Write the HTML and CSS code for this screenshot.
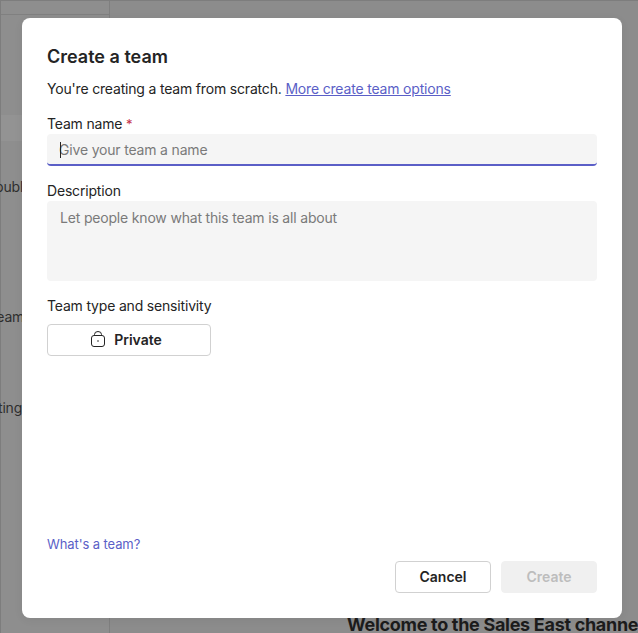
FILE: index.html
```html
<!DOCTYPE html>
<html lang="en">
<head>
<meta charset="utf-8">
<title>Create a team</title>
<link rel="stylesheet" href="styles.css">
</head>
<body>
<div class="app">
  <aside class="sidebar">
    <div class="side-head"></div>
    <div class="side-body">
      <div class="side-band"></div>
      <div class="side-list">
        <span class="side-item side-item-1">publ</span>
        <span class="side-item side-item-2">team</span>
        <span class="side-item side-item-3">ting</span>
      </div>
    </div>
  </aside>
  <main class="main">
    <h2 class="welcome">Welcome to the Sales East channel</h2>
  </main>
</div>
<div class="backdrop">
  <section class="dialog">
    <h1 class="title">Create a team</h1>
    <p class="intro">You're creating a team from scratch. <a class="link" href="#">More create team options</a></p>
    <div class="field field-name">
      <div class="label">Team name <span class="req">*</span></div>
      <div class="input input-focus"><span class="caret"></span><span class="ph">Give your team a name</span></div>
    </div>
    <div class="field field-desc">
      <div class="label">Description</div>
      <div class="textarea"><span class="ph">Let people know what this team is all about</span></div>
    </div>
    <div class="field field-type">
      <div class="label">Team type and sensitivity</div>
      <button class="btn btn-type" type="button">
        <svg class="lock" width="14" height="16" viewBox="0 0 14 16" fill="none" stroke="#242424" stroke-width="1">
          <rect x="0.5" y="4.5" width="13" height="11" rx="2.5"/>
          <path d="M3.5 4.5V3.5a3.5 3 0 0 1 7 0v1"/>
          <circle cx="7" cy="10" r="0.8" fill="#242424" stroke="none"/>
        </svg>
        <span>Private</span>
      </button>
    </div>
    <div class="spacer"></div>
    <a class="help" href="#">What's a team?</a>
    <div class="actions">
      <button class="btn btn-cancel" type="button">Cancel</button>
      <button class="btn btn-create" type="button" disabled>Create</button>
    </div>
  </section>
</div>
</body>
</html>
```
FILE: styles.css
```css
* { box-sizing: border-box; }
html, body { margin: 0; height: 100%; }
body {
  font-family: Inter, "Noto Sans", sans-serif;
  color: #242424;
  background: #8a8a8a;
  overflow: hidden;
  position: relative;
  width: 638px;
  height: 633px;
}
.app {
  display: flex;
  width: 638px;
  height: 633px;
  border-top: 1px solid #7d7d7d;
  border-left: 1px solid #7d7d7d;
}
.sidebar {
  width: 109px;
  flex: none;
  background: #8e8e8e;
  border-right: 1px solid #7f7f7f;
  display: flex;
  flex-direction: column;
}
.side-head { height: 14px; background: #8e8e8e; border-bottom: 1px solid #808080; }
.side-body { flex: 1; display: flex; flex-direction: column; }
.side-band { height: 26px; margin-top: 100px; background: #939393; }
.side-list { display: flex; flex-direction: column; padding-top: 36px; }
.side-item { font-size: 14px; line-height: 20px; color: #2e2e2e; white-space: nowrap; letter-spacing: -0.18px; }
.side-item-1 { margin-left: -6px; }
.side-item-2 { margin-top: 110px; margin-left: -9px; }
.side-item-3 { margin-top: 71px; margin-left: -3px; }
.main { flex: 1; position: relative; background: #8c8c8c; padding: 614px 0 0 237px; }
.welcome { margin: 0; font-size: 18px; line-height: 20px; font-weight: 700; color: #1c1c1c; white-space: nowrap; letter-spacing: -0.3px; }
.backdrop { position: absolute; inset: 0; }
.dialog {
  position: absolute;
  left: 22px;
  top: 18px;
  width: 600px;
  height: 600px;
  background: #fff;
  border-radius: 8px;
  box-shadow: 0 2px 10px rgba(0, 0, 0, 0.06);
  padding: 27px 25px 25px;
  display: flex;
  flex-direction: column;
}
.title { margin: 0; font-size: 18px; line-height: 24px; font-weight: 600; color: #242424; }
.intro { margin: 10px 0 0; font-size: 14px; line-height: 20px; color: #242424; letter-spacing: -0.18px; }
.link { color: #5b5fc7; text-decoration: underline; }
.field { display: flex; flex-direction: column; }
.field-name { margin-top: 15px; }
.field-desc { margin-top: 15px; }
.field-type { margin-top: 15px; }
.label { font-size: 14px; line-height: 20px; color: #242424; letter-spacing: -0.18px; }
.req { color: #c4314b; font-size: 13px; line-height: 1; }
.input {
  height: 32px;
  background: #f5f5f5;
  border-radius: 4px;
  border-bottom: 2px solid #5b5fc7;
  display: flex;
  align-items: center;
  padding: 2px 0 0 12px;
  font-size: 14px;
  position: relative;
}
.caret { position: absolute; left: 13px; top: 8px; width: 1px; height: 16px; background: #242424; }
.ph { color: #7a7a7a; font-size: 14px; line-height: 20px; letter-spacing: -0.18px; }
.textarea {
  height: 80px;
  background: #f5f5f5;
  border-radius: 4px;
  padding: 6px 13px;
}
.btn {
  font-family: inherit;
  font-size: 14px;
  font-weight: 600;
  border-radius: 4px;
  height: 32px;
  border: 1px solid #d1d1d1;
  background: #fff;
  color: #242424;
  display: flex;
  align-items: center;
  justify-content: center;
  padding: 0 0 2px;
}
.btn-type { width: 164px; gap: 9px; margin-top: 8px; padding-right: 5px; }
.lock { flex: none; }
.spacer { flex: 1; }
.help { color: #5b5fc7; font-size: 13px; line-height: 16px; text-decoration: none; letter-spacing: -0.1px; }
.actions { display: flex; justify-content: flex-end; gap: 10px; margin-top: 9px; }
.btn-cancel, .btn-create { width: 96px; }
.btn-create { background: #f0f0f0; border-color: #f0f0f0; color: #bdbdbd; }
```
